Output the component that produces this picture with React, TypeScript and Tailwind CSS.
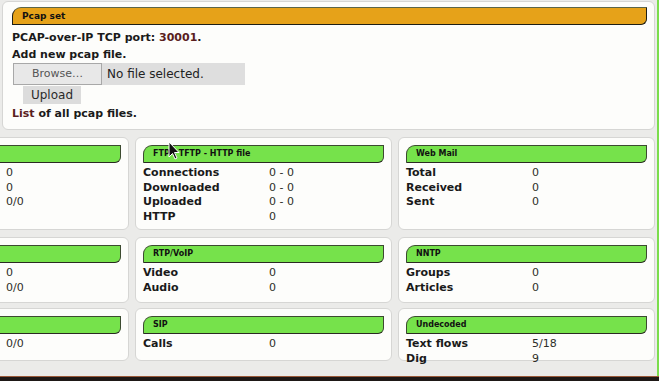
import React from "react";

type Row = [string, string];

const Panel = ({ title, rows, h }: { title: string; rows: Row[]; h: string }) => (
  <div className={`w-[257px] shrink-0 ${h} rounded-[6px] border border-[#d6d6d4] bg-[#fdfdfb] pt-[7px] px-[7px]`}>
    <div className="h-[18px] w-full bg-[#76e24b] border border-[#3c4a30] border-b-[#2a2a22] rounded-tl-[9px] rounded-br-[6px] pl-[9px] font-['DejaVu_Sans',sans-serif] text-[8px] font-bold leading-[16px] text-[#111] whitespace-nowrap overflow-hidden">
      {title}
    </div>
    <div className="mt-[3px]">
      {rows.map(([l, v], i) => (
        <div key={i} className="grid grid-cols-[126px_1fr] h-[14.5px] leading-[14.5px] text-[11px]">
          <span className="font-bold text-[#1a1a1a]">{l}</span>
          <span className="text-[#2e2e28]">{v}</span>
        </div>
      ))}
    </div>
  </div>
);

export default function App() {
  return (
    <div className="relative flex flex-col w-[659px] h-[381px] overflow-hidden bg-[#ebebe9] font-['DejaVu_Sans',sans-serif] text-[#1a1a1a]">
      <div className="flex h-[376px] shrink-0">
        <div className="w-[657px] flex flex-col">
          {/* Pcap set panel */}
          <section className="ml-[2px] mt-[1px] w-[653px] h-[129px] shrink-0 rounded-[6px] border border-[#d6d6d4] bg-[#fdfdfb] pt-[5px] pl-[9px]">
            <div className="h-[18px] w-[635px] bg-[#e6a219] border border-[#1e1e14] border-t-[#5b6548] rounded-tl-[9px] rounded-br-[6px] pl-[9px] text-[9px] font-bold leading-[16px] text-[#111]">
              Pcap set
            </div>
            <div className="mt-[4px] text-[11px] font-bold leading-[17px]">
              PCAP-over-IP TCP port: <span className="text-[#5a1e1e]">30001</span>.
            </div>
            <div className="text-[11px] font-bold leading-[17px]">Add new pcap file.</div>
            <div className="ml-[1px] flex h-[22px] w-[232px] items-center bg-[#dedede]">
              <div className="flex h-full w-[89px] items-center justify-center border border-[#a8a8a8] bg-[#e8e8e8] text-[11px] text-[#555]">
                Browse…
              </div>
              <span className="ml-[5px] text-[12px] text-[#222]">No file selected.</span>
            </div>
            <div className="ml-[11px] mt-[1px] flex h-[18px] w-[58px] items-center justify-center bg-[#dcdcdc] text-[12px] text-[#2a2a2a]">
              Upload
            </div>
            <div className="mt-[1px] text-[11px] font-bold leading-[17px]">
              <span className="text-[#5a1e1e]">List</span> of all pcap files.
            </div>
          </section>

          {/* Row 1 */}
          <div className="ml-[-128px] mt-[7px] flex gap-[6px]">
            <Panel title="" h="h-[93px]" rows={[["", "0"], ["", "0"], ["", "0/0"]]} />
            <Panel title="FTP - TFTP - HTTP file" h="h-[93px]" rows={[["Connections", "0 - 0"], ["Downloaded", "0 - 0"], ["Uploaded", "0 - 0"], ["HTTP", "0"]]} />
            <Panel title="Web Mail" h="h-[93px]" rows={[["Total", "0"], ["Received", "0"], ["Sent", "0"]]} />
          </div>
          {/* Row 2 */}
          <div className="ml-[-128px] mt-[7px] flex gap-[6px]">
            <Panel title="" h="h-[66px]" rows={[["", "0"], ["", "0/0"]]} />
            <Panel title="RTP/VoIP" h="h-[66px]" rows={[["Video", "0"], ["Audio", "0"]]} />
            <Panel title="NNTP" h="h-[66px]" rows={[["Groups", "0"], ["Articles", "0"]]} />
          </div>
          {/* Row 3 */}
          <div className="ml-[-128px] mt-[5px] flex gap-[6px]">
            <Panel title="" h="h-[53px]" rows={[["", "0/0"]]} />
            <Panel title="SIP" h="h-[53px]" rows={[["Calls", "0"]]} />
            <Panel title="Undecoded" h="h-[53px]" rows={[["Text flows", "5/18"], ["Dig", "9"]]} />
          </div>
        </div>
        <div className="w-[2px] bg-[#7bdd4c]" />
      </div>
      <div className="h-[1px] shrink-0 bg-[#9a5a3a]" />
      <div className="flex-1 bg-[#1e1816]" />

      {/* mouse cursor */}
      <svg className="absolute left-[168px] top-[141px]" width="13" height="20" viewBox="0 0 13 20">
        <path d="M1 1 L1 16 L4.5 12.5 L7 18 L9 17 L6.5 11.5 L11 11.5 Z" fill="#111" stroke="#fff" strokeWidth="1" />
      </svg>
    </div>
  );
}
